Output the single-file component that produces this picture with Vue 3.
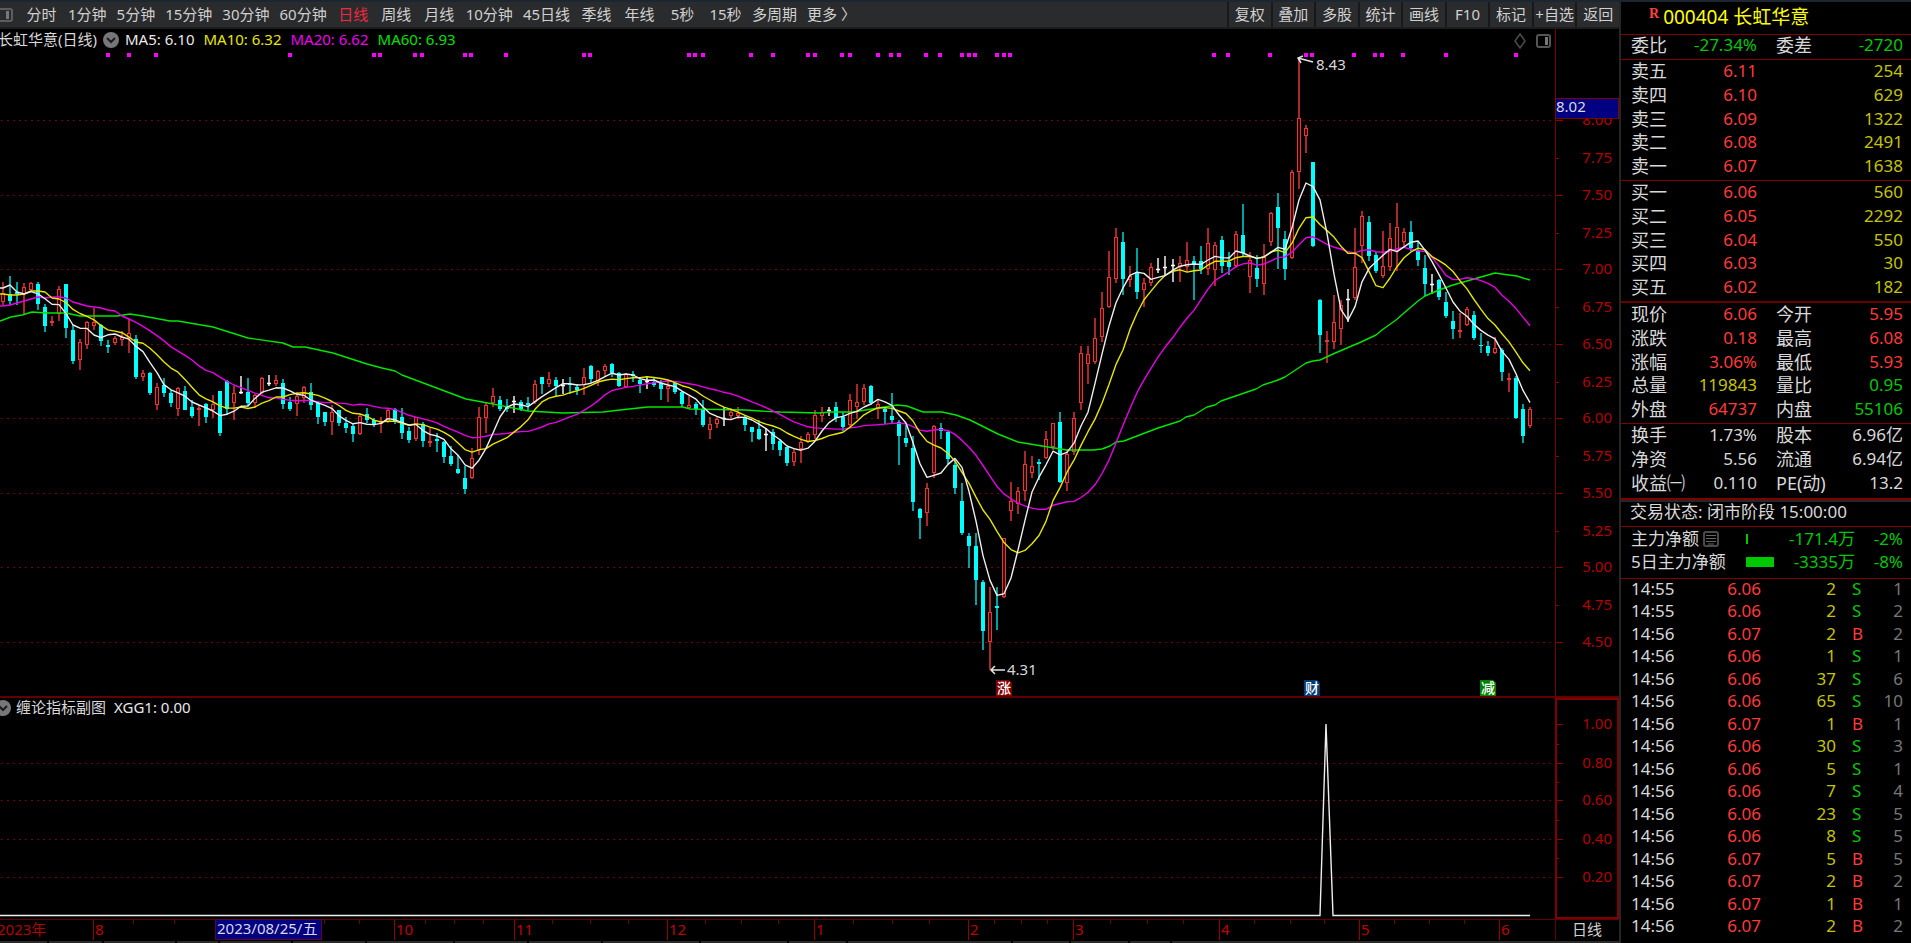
<script setup>
const periods = ['分时', '1分钟', '5分钟', '15分钟', '30分钟', '60分钟', '日线', '周线', '月线', '10分钟', '45日线', '季线', '年线', '5秒', '15秒', '多周期', '更多 〉']
const actions = ['复权', '叠加', '多股', '统计', '画线', 'F10', '标记', '+自选', '返回']

// One token per session: u = up, d = down, f = flat, then high, body top, body bottom, low on the canvas.
const sessions = `
u282,293,302,305 d276,294,301,305 d282,292,294,305 u283,287,294,314 u282,283,290,291 d282,284,304,310 d304,307,326,332
u316,321,323,326 u286,289,314,321 d284,284,328,338 d325,330,361,364 u339,342,360,370 u321,322,345,349 u308,322,326,330
d324,325,341,346 d340,345,347,353 u336,338,343,345 u331,337,340,346 u319,333,338,353 d335,339,377,379 u370,373,377,381
d372,373,393,395 u383,387,405,410 d378,385,393,397 d390,393,403,407 u387,388,409,416 d386,391,410,410 d400,407,416,418
u405,408,410,426 d403,404,417,423 u395,404,410,418 d391,391,433,436 d380,381,409,415 u386,393,403,420 f376,392,392,394
d378,392,403,406 u394,395,403,408 u377,378,393,394 f375,383,383,386 u375,380,384,386 d379,383,404,409 d397,402,409,411
u392,396,404,416 u386,387,398,403 d383,392,405,410 d401,403,417,424 d412,412,422,426 u405,412,422,435 d410,410,423,426
d417,423,428,433 d423,426,434,442 u414,416,434,435 d408,414,420,423 d418,420,425,427 u417,422,424,433 u408,410,422,423
d408,409,422,424 d408,417,433,439 d427,431,440,443 u417,417,439,441 d422,424,441,447 u428,441,443,447 d433,439,441,452
d441,442,457,463 d446,456,464,466 d455,469,473,474 d466,478,489,494 u448,458,478,479 u407,417,450,455 u403,405,418,433
u388,396,403,407 d396,400,409,411 d399,407,409,412 f396,401,401,413 d400,402,409,411 d397,403,405,411 u380,384,402,404
d377,377,384,394 u372,379,384,387 d377,380,386,396 f379,385,385,394 d377,384,385,394 d384,387,390,395 u368,377,385,395
d365,366,379,383 u370,371,381,386 u364,366,371,377 d363,364,373,377 d372,373,386,387 u373,374,387,388 d371,374,376,382
d377,380,384,393 f376,381,381,389 d377,382,385,387 d380,383,389,400 u381,386,389,402 d381,383,392,394 d391,392,404,407
u396,405,408,409 d402,404,409,415 d400,409,425,427 u417,424,430,439 u417,419,424,428 f407,418,418,426 u408,412,416,420
u407,413,416,419 d415,417,425,431 d427,427,432,442 d420,429,439,440 f428,434,434,451 d429,432,444,450 d439,441,450,456
d447,447,463,466 u448,452,462,466 u436,442,449,463 u432,434,442,443 u410,415,435,439 u407,412,416,422 f407,410,410,416
d402,407,418,422 d412,417,427,431 u394,400,425,428 u384,402,407,419 u384,388,402,405 d385,386,403,405 u400,404,409,419
d407,409,412,424 d393,416,420,423 d420,422,436,465 d425,438,443,447 d436,448,502,511 d508,509,518,539 u483,488,513,526
u425,426,473,478 d423,428,431,439 d430,432,459,464 d460,465,488,494 d483,501,533,535 d533,536,546,568 d533,546,580,605
d580,582,631,650 u587,612,642,670 d587,606,608,630 u538,538,597,598 u482,501,511,521 u487,491,504,514 u451,464,491,501
u456,466,473,478 d459,462,464,480 u431,439,458,459 u423,423,447,450 d412,422,482,483 u449,454,483,491 u412,418,452,455
u346,353,403,410 u346,354,364,384 u318,338,362,364 u292,308,337,342 u251,277,307,308 u228,237,279,283 d232,242,279,295
u266,276,280,287 d248,272,292,299 u278,283,290,307 u263,267,283,286 f258,269,269,273 f256,267,267,275 f259,265,265,282
u256,263,267,282 u242,260,267,272 d256,261,265,300 d246,261,269,274 u228,243,269,275 u242,245,270,286 d236,240,266,273
d252,262,267,275 u231,234,266,268 d204,235,253,257 u252,260,277,293 d255,268,279,287 u244,257,284,295 u212,213,242,246
d193,207,228,269 d231,239,269,280 u170,172,258,259 u57,118,172,189 u125,128,136,153 d162,162,246,247 d299,300,335,353
u331,340,342,363 u295,322,342,349 u300,305,329,345 f289,299,299,322 u228,267,298,300 u211,216,246,263 d216,222,256,261
d252,255,271,273 u231,266,276,278 u223,238,267,271 u203,227,251,271 u228,232,242,248 d221,232,248,252 d242,250,260,266
d255,268,284,296 f274,284,284,294 d279,280,297,300 d292,302,316,318 d311,321,329,339 u313,330,332,338 u307,309,325,326
d311,315,338,340 d333,345,346,353 d341,346,353,356 u337,348,353,354 d348,350,372,381 u373,378,379,392 d376,378,418,419
d404,409,436,443 u407,409,426,428`

const candles = sessions.trim().split(/\s+/).map((token, i) => {
  const [high, top, bottom, low] = token.slice(1).split(',').map(Number)
  const kind = token[0]
  return { kind, high, top, bottom, low, x: Math.round(3 + 7.003 * i), close: kind === 'd' ? bottom : top }
})

// Averages take their opening values from earlier sessions, which are off the canvas.
function average(span, opening) {
  const points = candles.map((c, i) => {
    if (i < opening.length) return `${c.x},${opening[i]}`
    const part = candles.slice(i - span + 1, i + 1)
    return `${c.x},${(part.reduce((sum, p) => sum + p.close, 0) / span).toFixed(1)}`
  })
  return [`0,${opening[0]}`, ...points].join(' ')
}
const ma5 = average(5, [288, 285, 292, 294])
const ma10 = average(10, [294, 295, 295, 294, 291, 291, 292, 298, 299])
const ma20 = average(20, [306, 305, 303, 301, 299, 297, 298, 297, 297, 298, 302, 304, 306, 307, 308, 310, 311, 316, 319])
const ma60 = '0,321 11,317 22,315 32,312 46,313 66,313 80,316 117,316 130,314 143,316 170,321 178,321 213,327 248,338 283,343 293,347 305,347 333,353 367,364 382,368 395,371 402,375 466,399 493,404 528,411 563,413 603,412 620,410 648,407 683,407 690,409 746,410 760,411 780,412 820,413 830,412 853,412 897,405 907,406 923,412 942,412 956,415 970,420 998,434 1018,442 1042,446 1067,450 1093,450 1102,449 1110,446 1116,442 1124,441 1137,436 1158,428 1180,421 1186,417 1194,415 1207,407 1215,405 1221,401 1256,389 1263,385 1278,380 1285,377 1306,363 1313,361 1320,360 1333,354 1361,342 1376,335 1382,330 1396,320 1404,313 1418,301 1425,296 1439,290 1453,285 1474,279 1481,277 1488,275 1495,273 1502,274 1509,275 1517,276 1523,278 1530,280'

const markers = [108, 129, 156, 290, 374, 380, 415, 422, 465, 471, 506, 584, 590, 689, 695, 703, 751, 773, 808, 815, 842, 850, 878, 891, 899, 926, 940, 962, 969, 975, 997, 1004, 1010, 1214, 1228, 1270, 1306, 1312, 1354, 1375, 1382, 1403, 1446, 1516]

const priceAxis = [
  ['8.00', 120, true], ['7.75', 158, false], ['7.50', 195, true], ['7.25', 233, false], ['7.00', 269, true],
  ['6.75', 307, false], ['6.50', 344, true], ['6.25', 382, false], ['6.00', 418, true], ['5.75', 456, false],
  ['5.50', 493, true], ['5.25', 531, false], ['5.00', 567, true], ['4.75', 605, false], ['4.50', 642, true],
]
const indicatorAxis = [['1.00', 724], ['0.80', 763], ['0.60', 800], ['0.40', 839], ['0.20', 877]]
const indicatorMinor = [744, 782, 820, 858]

const months = [['8', 93], ['10', 394], ['11', 514], ['12', 667], ['1', 814], ['2', 968], ['3', 1073], ['4', 1219], ['5', 1359], ['6', 1499]]
const weeks = [133, 174, 324, 359, 425, 454, 483, 552, 590, 628, 705, 741, 778, 853, 892, 929, 994, 1021, 1047, 1110, 1147, 1183, 1254, 1290, 1324, 1394, 1429, 1464]
const events = [['涨', 996, '#800000'], ['财', 1304, '#003a72'], ['减', 1480, '#008200']]
const footTabs = [46, 52, 69, 40, 70, 70, 85, 70, 70, 94, 85, 55, 160, 55, 55, 40, 437]

const asks = [['卖五', '6.11', '254'], ['卖四', '6.10', '629'], ['卖三', '6.09', '1322'], ['卖二', '6.08', '2491'], ['卖一', '6.07', '1638']]
const bids = [['买一', '6.06', '560'], ['买二', '6.05', '2292'], ['买三', '6.04', '550'], ['买四', '6.03', '30'], ['买五', '6.02', '182']]
const quotes = [
  ['现价', '6.06', 'red', '今开', '5.95', 'red'],
  ['涨跌', '0.18', 'red', '最高', '6.08', 'red'],
  ['涨幅', '3.06%', 'red', '最低', '5.93', 'red'],
  ['总量', '119843', 'yellow', '量比', '0.95', 'green'],
  ['外盘', '64737', 'red', '内盘', '55106', 'green'],
]
const basics = [
  ['换手', '1.73%', '股本', '6.96亿'],
  ['净资', '5.56', '流通', '6.94亿'],
  ['收益㈠', '0.110', 'PE(动)', '13.2'],
]
const ticks = [
  ['14:55', '6.06', 2, 'S', 1], ['14:55', '6.06', 2, 'S', 2], ['14:56', '6.07', 2, 'B', 2], ['14:56', '6.06', 1, 'S', 1],
  ['14:56', '6.06', 37, 'S', 6], ['14:56', '6.06', 65, 'S', 10], ['14:56', '6.07', 1, 'B', 1], ['14:56', '6.06', 30, 'S', 3],
  ['14:56', '6.06', 5, 'S', 1], ['14:56', '6.06', 7, 'S', 4], ['14:56', '6.06', 23, 'S', 5], ['14:56', '6.06', 8, 'S', 5],
  ['14:56', '6.07', 5, 'B', 5], ['14:56', '6.07', 2, 'B', 2], ['14:56', '6.07', 1, 'B', 1], ['14:56', '6.07', 2, 'B', 2],
  ['15:00', '6.06', 434, '', 15],
]
</script>

<template>
  <div class="terminal">
    <main class="workspace">
      <nav class="toolbar">
        <svg class="dock" width="20" height="25" viewBox="0 0 20 25">
          <rect x="-2" y="7" width="14" height="12" rx="2" fill="none" stroke="#5c5d5f" stroke-width="2" />
          <rect x="6" y="9" width="3" height="8" fill="#77787a" />
        </svg>
        <button v-for="p in periods" :key="p" type="button" class="period" :class="{ active: p === '日线' }">{{ p }}</button>
        <div class="actions">
          <button v-for="a in actions" :key="a" type="button" class="action">{{ a }}</button>
        </div>
      </nav>

      <section class="pane">
        <header class="legend">
          <span class="name">长虹华意(日线)</span>
          <svg class="chevron" width="16" height="16" viewBox="0 0 16 16">
            <circle cx="8" cy="8" r="8" fill="#77777a" />
            <path d="M4 6l4 4 4-4" fill="none" stroke="#1c1c1c" stroke-width="2" />
          </svg>
          <span class="white">MA5: 6.10</span>
          <span class="bright-yellow">MA10: 6.32</span>
          <span class="magenta">MA20: 6.62</span>
          <span class="bright-green">MA60: 6.93</span>
        </header>
        <svg class="canvas" viewBox="0 29 1619 669">
          <g stroke="#760000" stroke-dasharray="2 4">
            <template v-for="[label, y, major] in priceAxis" :key="label">
              <line v-if="major" x1="1" x2="1555" :y1="y + 0.5" :y2="y + 0.5" />
            </template>
          </g>
          <path d="M1555.5 29V698" stroke="#700000" />
          <path d="M0 697H1619" stroke="#600000" stroke-width="2" />

          <rect v-for="x in markers" :key="x" :x="x - 2" y="53" width="4" height="4" fill="#f0f" />

          <g v-for="c in candles" :key="c.x">
            <template v-if="c.kind === 'u'">
              <path :d="`M${c.x} ${c.high}V${c.top}M${c.x} ${c.bottom}V${c.low}`" stroke="#f03838" stroke-width="1.4" />
              <rect :x="c.x - 1.5" :y="c.top + 0.5" width="3" :height="Math.max(c.bottom - c.top - 1, 1)" fill="#300808" stroke="#e83636" />
            </template>
            <template v-else-if="c.kind === 'd'">
              <path :d="`M${c.x} ${c.high}V${c.low}`" stroke="#00e4e4" stroke-width="1.4" />
              <rect :x="c.x - 2" :y="c.top" width="4" :height="Math.max(c.bottom - c.top, 1)" fill="#0ff" />
            </template>
            <path v-else :d="`M${c.x} ${c.high}V${c.low}M${c.x - 2} ${c.top + 0.5}h4`" stroke="#fff" stroke-width="1.4" />
          </g>

          <g fill="none" stroke-width="1.4" stroke-linejoin="round">
            <polyline :points="ma60" stroke="#00e600" />
            <polyline :points="ma20" stroke="#e600e6" />
            <polyline :points="ma10" stroke="#e6e600" />
            <polyline :points="ma5" stroke="#eee" />
          </g>

          <g fill="none" stroke="#e4e4e4" stroke-width="1.5">
            <path d="M1313 62L1298 58M1303 56L1298 58L1301 63" />
            <path d="M1005 670H991M995 666L991 670L995 674" />
          </g>
          <g class="note" fill="#d8d8d8">
            <text x="1316" y="70">8.43</text>
            <text x="1007" y="675">4.31</text>
          </g>

          <g v-for="[mark, x, color] in events" :key="mark">
            <path :d="`M${x} 680h13l3 3v13h-16z`" :fill="color" />
            <text class="event" :x="x + 8" y="693" text-anchor="middle" fill="#fff">{{ mark }}</text>
          </g>

          <g v-for="[label, y, major] in priceAxis" :key="label">
            <path :d="`M1556 ${y + 0.5}h${major ? 7 : 3}`" stroke="#900000" />
            <text class="note" x="1612" :y="y + 5" text-anchor="end" fill="#b40000">{{ label }}</text>
          </g>
          <rect x="1555.5" y="98.5" width="63" height="20" fill="#000080" stroke="#800000" />
          <text class="note" x="1556" y="112" fill="#d8d8e8">8.02</text>

          <path d="M1520 34l5 7-5 7-5-7z" fill="none" stroke="#4c4c4c" stroke-width="1.5" />
          <rect x="1537" y="35" width="13" height="12" rx="2" fill="none" stroke="#555" stroke-width="2" />
          <rect x="1545" y="37" width="3" height="8" fill="#777" />
        </svg>
      </section>

      <section class="pane">
        <header class="legend sub">
          <svg class="chevron" width="16" height="16" viewBox="0 0 16 16">
            <circle cx="8" cy="8" r="8" fill="#77777a" />
            <path d="M4 6l4 4 4-4" fill="none" stroke="#1c1c1c" stroke-width="2" />
          </svg>
          <span>缠论指标副图</span>
          <span class="white">XGG1: 0.00</span>
        </header>
        <svg class="canvas" viewBox="0 698 1619 221">
          <g stroke="#760000" stroke-dasharray="2 4">
            <line v-for="[label, y] in indicatorAxis.slice(1)" :key="label" x1="1" x2="1555" :y1="y + 0.5" :y2="y + 0.5" />
          </g>
          <polyline points="0,915.5 1320,915.5 1326,724 1333,915.5 1530,915.5" fill="none" stroke="#eee" stroke-width="1.4" />
          <rect x="1556" y="699" width="62" height="219" fill="none" stroke="#800000" stroke-width="2" />
          <path v-for="y in indicatorMinor" :key="y" :d="`M1557 ${y + 0.5}h2`" stroke="#900000" />
          <g v-for="[label, y] in indicatorAxis" :key="label">
            <path :d="`M1557 ${y + 0.5}h6`" stroke="#900000" />
            <text class="note" x="1612" :y="y + 5" text-anchor="end" fill="#b40000">{{ label }}</text>
          </g>
        </svg>
      </section>

      <section class="pane">
        <svg class="canvas" viewBox="0 919 1619 22">
          <path d="M0 919.5H1619M1555.5 919V940" stroke="#600000" />
          <path v-for="x in weeks" :key="x" :d="`M${x + 0.5} 920v4`" stroke="#700000" />
          <text class="note" x="-3" y="935" fill="#b40000">2023年</text>
          <g v-for="[label, x] in months" :key="label">
            <path :d="`M${x + 0.5} 920v20`" stroke="#900000" />
            <text class="note" :x="x + 2" y="935" fill="#c00000">{{ label }}</text>
          </g>
          <rect x="215.5" y="919.5" width="106" height="20" fill="#000080" stroke="#600030" />
          <text class="note" x="217" y="934" fill="#d8d8e8">2023/08/25/五</text>
          <text class="note" x="1572" y="935" fill="#d0d0d0">日线</text>
        </svg>
      </section>
      <footer class="foot">
        <span v-for="(w, i) in footTabs" :key="i" class="foot-tab" :style="{ flexGrow: w }"></span>
      </footer>
    </main>

    <aside class="quote">
      <h1 class="stock"><sup class="flag">R</sup><span>000404 长虹华意</span></h1>
      <table class="grid single">
        <tbody>
          <tr><th>委比</th><td class="green">-27.34%</td><th>委差</th><td class="green">-2720</td></tr>
        </tbody>
      </table>
      <table class="grid">
        <tbody>
          <tr v-for="r in asks" :key="r[0]"><th>{{ r[0] }}</th><td class="red">{{ r[1] }}</td><td colspan="2" class="yellow">{{ r[2] }}</td></tr>
        </tbody>
      </table>
      <table class="grid thick">
        <tbody>
          <tr v-for="r in bids" :key="r[0]"><th>{{ r[0] }}</th><td class="red">{{ r[1] }}</td><td colspan="2" class="yellow">{{ r[2] }}</td></tr>
        </tbody>
      </table>
      <table class="grid">
        <tbody>
          <tr v-for="r in quotes" :key="r[0]"><th>{{ r[0] }}</th><td :class="r[2]">{{ r[1] }}</td><th>{{ r[3] }}</th><td :class="r[5]">{{ r[4] }}</td></tr>
        </tbody>
      </table>
      <table class="grid basics">
        <tbody>
          <tr v-for="r in basics" :key="r[0]"><th>{{ r[0] }}</th><td>{{ r[1] }}</td><th>{{ r[2] }}</th><td>{{ r[3] }}</td></tr>
        </tbody>
      </table>
      <p class="status">交易状态: 闭市阶段 15:00:00</p>
      <div class="funds">
        <div class="fund">
          <span class="fund-name">主力净额
            <svg class="list" width="16" height="16" viewBox="0 0 16 16">
              <rect x="1" y="1" width="14" height="14" rx="2" fill="none" stroke="#4a4a4a" stroke-width="2" />
              <path d="M3 4.5h10M3 7.5h10M3 10.5h10M5 13h6" stroke="#666" />
            </svg>
          </span>
          <span class="gauge"><i class="level" :style="{ width: '2px' }"></i></span>
          <span class="amount">-171.4万</span><span class="share">-2%</span>
        </div>
        <div class="fund">
          <span class="fund-name">5日主力净额</span>
          <span class="gauge"><i class="level" :style="{ width: '28px' }"></i></span>
          <span class="amount">-3335万</span><span class="share">-8%</span>
        </div>
      </div>
      <table class="ticks">
        <tbody>
          <tr v-for="(t, i) in ticks" :key="i">
            <td class="time">{{ t[0] }}</td>
            <td class="price red">{{ t[1] }}</td>
            <td class="volume yellow">{{ t[2] }}</td>
            <td class="side" :class="t[3] === 'B' ? 'red' : 'green'">{{ t[3] }}</td>
            <td class="count">{{ t[4] }}</td>
          </tr>
        </tbody>
      </table>
    </aside>
  </div>
</template>

<style>
body {
  background: #000;
}
</style>

<style scoped>
.terminal {
  box-sizing: border-box;
  display: flex;
  height: 100vh;
  overflow: hidden;
  border-top: 2px solid #1b2630;
  background: #000;
  color: #d8d8d8;
  font-family: "Noto Sans", "Noto Sans CJK SC", sans-serif;
  font-size: 15px;
}
.workspace {
  flex: 1;
  min-width: 0;
  display: flex;
  flex-direction: column;
  border-right: 2px solid #262626;
}
.toolbar {
  display: flex;
  height: 25px;
  flex: none;
  background: #2a2b2d;
  border-bottom: 2px solid #1d1d1e;
}
.dock {
  flex: none;
}
.period,
.action {
  margin: 0;
  border: 0;
  background: none;
  color: #d0d0d0;
  font: inherit;
  line-height: 25px;
  white-space: nowrap;
}
.period {
  min-width: 43px;
  padding: 0 5px;
}
.period.active {
  color: #f02840;
}
.actions {
  display: grid;
  grid-template-columns: repeat(9, 1fr);
  width: 392px;
  margin-left: auto;
}
.action {
  padding: 0;
  min-width: 0;
  border-left: 2px solid #18191a;
}
.pane {
  position: relative;
  flex: none;
}
.canvas {
  display: block;
  width: 100%;
  overflow: hidden;
}
.legend {
  position: absolute;
  top: 0;
  left: -2px;
  display: flex;
  align-items: center;
  gap: 9px;
  height: 22px;
  line-height: 20px;
  white-space: nowrap;
}
.legend span {
  padding-bottom: 2px;
}
.legend .chevron {
  margin: 0 -3px;
}
.legend.sub {
  gap: 8px;
  height: 20px;
}
.note {
  font-size: 15px;
}
.event {
  font-size: 14px;
  font-weight: 500;
}
.foot {
  display: flex;
  gap: 2px;
  flex: 1;
}
.foot-tab {
  flex-basis: 0;
  background: #2a2a2b;
}
.white {
  color: #e8e8e8;
}
.bright-yellow {
  color: #e6e600;
}
.magenta {
  color: #f000f0;
}
.bright-green {
  color: #00e000;
}
.red {
  color: #ff3a3a;
}
.yellow {
  color: #c4c400;
}
.green {
  color: #00c800;
}
.quote {
  width: 290px;
  flex: none;
  overflow: hidden;
  font-size: 17px;
}
.stock {
  display: flex;
  gap: 4px;
  margin: 0;
  padding-left: 28px;
  height: 32px;
  border-bottom: 1px solid #800000;
  color: #ff0;
  font-size: 19px;
  font-weight: 400;
  line-height: 30px;
}
.flag {
  color: #ff4040;
  font: bold 14px/24px "Liberation Serif", serif;
}
.grid {
  display: block;
  border-bottom: 1px solid #800000;
  padding: 0 8px 2px 10px;
  border-spacing: 0;
}
.grid tbody {
  display: block;
}
.grid tr {
  display: grid;
  grid-template-columns: 56px 70px 65px 1fr;
  height: 24px;
  line-height: 22px;
  white-space: nowrap;
}
.grid tr:nth-child(2n + 3) {
  height: 23px;
}
.grid th {
  padding: 0;
  font-size: 18px;
  font-weight: 400;
  text-align: left;
}
.grid td + th {
  padding-left: 19px;
}
.grid td {
  padding: 0;
  text-align: right;
}
.grid td[colspan] {
  grid-column: span 2;
}
.grid.single {
  padding-bottom: 0;
}
.grid.single tr {
  line-height: 20px;
}
.grid.thick {
  border-bottom: 2px solid #680000;
}
.grid.basics {
  padding-bottom: 3px;
  border-bottom: 2px solid #800000;
}
.status {
  margin: 0;
  padding: 0 0 4px 9px;
  border-top: 2px solid #262626;
  border-bottom: 1px solid #800000;
  line-height: 20px;
}
.funds {
  padding: 0 8px 5px 10px;
  border-bottom: 1px solid #800000;
}
.fund {
  display: grid;
  grid-template-columns: 115px 28px 1fr 48px;
  align-items: center;
  height: 23px;
  line-height: 22px;
  white-space: nowrap;
}
.fund-name {
  display: flex;
  align-items: center;
  gap: 4px;
}
.level {
  display: block;
  height: 10px;
  background: #00c800;
}
.amount,
.share {
  color: #00c800;
  text-align: right;
}
.ticks {
  display: block;
  padding: 0 8px 0 10px;
  border-spacing: 0;
}
.ticks tbody {
  display: block;
}
.ticks tr {
  display: grid;
  grid-template-columns: 60px 70px 75px 32px 1fr;
  height: 22px;
  line-height: 20px;
}
.ticks tr:nth-child(even) {
  height: 23px;
}
.ticks td {
  padding: 0;
  text-align: right;
}
.ticks .time {
  text-align: left;
}
.ticks .side {
  padding-left: 16px;
  text-align: left;
}
.ticks .count {
  color: #777;
}
</style>
